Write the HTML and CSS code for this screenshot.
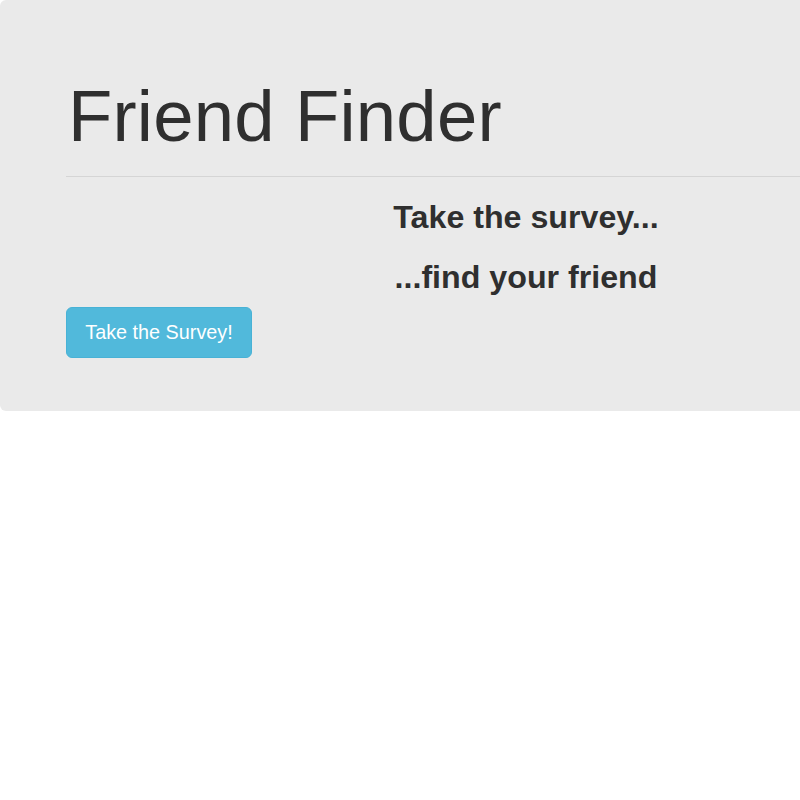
FILE: index.html
```html
<!DOCTYPE html>
<html>
<head>
<meta charset="utf-8">
<title>Friend Finder</title>
<link rel="stylesheet" href="styles.css">
</head>
<body>
<div class="jumbotron">
  <div class="inner">
    <h1 class="title">Friend Finder</h1>
    <hr class="rule">
    <h2 class="tagline">Take the survey...</h2>
    <h2 class="tagline">...find your friend</h2>
    <a class="btn" href="#">Take the Survey!</a>
  </div>
</div>
</body>
</html>
```

FILE: styles.css
```css
html, body {
  margin: 0;
  padding: 0;
  background: #ffffff;
}

body {
  font-family: "Liberation Sans", Arial, Helvetica, sans-serif;
  color: #2f2f2f;
}

.jumbotron {
  width: 100%;
  height: 411px;
  box-sizing: border-box;
  background: #eaeaea;
  border-radius: 6px 0 0 6px;
  padding: 76px 0 0 66px;
}

.inner {
  display: flex;
  flex-direction: column;
}

.title {
  margin: 0 0 0 2px;
  font-size: 72.5px;
  line-height: 79px;
  font-weight: 400;
  letter-spacing: 0.2px;
}

.rule {
  margin: 21px 0 0 0;
  border: 0;
  border-top: 1px solid #d5d5d5;
  height: 0;
}

.tagline {
  margin: 0;
  padding-left: 186px;
  font-size: 32.2px;
  line-height: 35px;
  font-weight: 700;
  text-align: center;
}

.tagline:first-of-type {
  margin-top: 23px;
}

.tagline + .tagline {
  margin-top: 25px;
}

.btn {
  align-self: flex-start;
  margin-top: 12px;
  display: inline-block;
  box-sizing: border-box;
  height: 51px;
  width: 186px;
  padding: 0;
  text-align: center;
  line-height: 49px;
  font-size: 19.8px;
  color: #ffffff;
  text-decoration: none;
  background: #51b9db;
  border: 1px solid #48b2d6;
  border-radius: 6px;
}
```
